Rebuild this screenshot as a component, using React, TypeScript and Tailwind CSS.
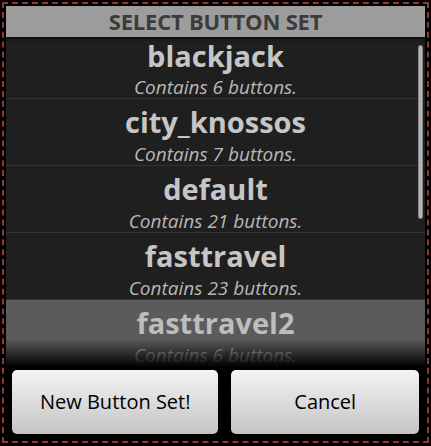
const sets = [
  { name: "blackjack", count: 6 },
  { name: "city_knossos", count: 7 },
  { name: "default", count: 21 },
  { name: "fasttravel", count: 23 },
  { name: "fasttravel2", count: 6 },
]

function SetRow({ name, count, selected, first }: { name: string; count: number; selected?: boolean; first?: boolean }) {
  return (
    <div
      className={
        "flex flex-col items-center border-b border-[#343434] " +
        (first ? "h-[62px] " : "h-[67px] ") +
        (selected ? "bg-[#5b5b5b] text-[#bdbdbd]" : "text-[#c6c6c6]")
      }
    >
      <div className={"text-[29px] font-bold leading-[38px] " + (first ? "mt-0" : "mt-[4px]")}>{name}</div>
      <div className={"text-[19px] italic leading-[24px] text-[#b8b8b8] " + (first ? "mt-0" : "mt-[1px]")}>
        Contains {count} buttons.
      </div>
    </div>
  )
}

export default function App() {
  return (
    <div className="w-[431px] h-[446px] bg-black pt-[2px] pl-[2px] pr-[2px] pb-[3px]" style={{ fontFamily: '"Open Sans", sans-serif' }}>
      <div className="h-full border-2 border-dashed border-[#9a3434] p-[2px] flex flex-col">
        {/* dialog title */}
        <div className="h-[31px] bg-[#9c9c9c] flex items-center justify-center shrink-0 relative z-10 shadow-[0_2px_3px_rgba(0,0,0,0.6)]">
          <span className="text-[22px] font-bold text-[#3b3b3b] tracking-[-0.2px]">SELECT BUTTON SET</span>
        </div>

        {/* list */}
        <div className="relative h-[330px] overflow-hidden bg-[#1f1f1f] shrink-0">
          {sets.map((s, i) => (
            <SetRow key={s.name} name={s.name} count={s.count} first={i === 0} selected={s.name === "fasttravel2"} />
          ))}
          <div className="absolute right-[2px] top-[8px] w-[5px] h-[174px] rounded-[3px] bg-[#b4b4b4] border border-[#8a8a8a]" />
          <div className="absolute left-0 right-0 bottom-0 h-[28px] bg-gradient-to-b from-transparent to-black" />
        </div>

        {/* buttons */}
        <div className="flex-1 flex gap-[13px] px-[6px] pt-[3px] pb-[5px] bg-black">
          <button className="flex-[207] rounded-[5px] bg-gradient-to-b from-[#f4f4f4] to-[#c4c4c4] text-[20px] text-black">
            New Button Set!
          </button>
          <button className="flex-[188] rounded-[5px] bg-gradient-to-b from-[#f4f4f4] to-[#c4c4c4] text-[20px] text-black">
            Cancel
          </button>
        </div>
      </div>
    </div>
  )
}
